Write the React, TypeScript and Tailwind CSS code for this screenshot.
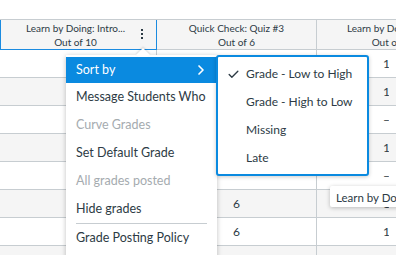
import { Check, ChevronRight } from "lucide-react";

const col3 = ["10", "10", "–", "10", "–", "10", "10", "10"];
const col2: Record<number, string> = { 5: "6", 6: "6" };

const menuItems = [
  { label: "Message Students Who" },
  { label: "Curve Grades", disabled: true },
  { label: "Set Default Grade" },
  { label: "All grades posted", disabled: true },
  { label: "Hide grades" },
];

const sortItems = ["Grade - Low to High", "Grade - High to Low", "Missing", "Late"];

export default function App() {
  return (
    <div className="relative h-[255px] w-[396px] overflow-hidden bg-white font-['Lato','Noto_Sans',sans-serif] text-[#2d3b45]">
      <div className="h-[19px]" />

      {/* header */}
      <div className="flex h-[31px] w-[480px] border-t border-[#c7cdd1] bg-[#f5f5f5] text-[10px] leading-[14px]">
        <div className="relative flex w-[157px] flex-col items-center justify-center border border-t-0 border-[#1b8be0] pr-[6px]">
          <span>Learn by Doing: Intro...</span>
          <span>Out of 10</span>
          <div className="absolute right-[13px] top-[9px] flex flex-col gap-[2px]">
            <span className="block h-[2px] w-[2px] bg-[#2d3b45]" />
            <span className="block h-[2px] w-[2px] bg-[#2d3b45]" />
            <span className="block h-[2px] w-[2px] bg-[#2d3b45]" />
          </div>
        </div>
        <div className="flex w-[160px] flex-col items-center justify-center border-r border-b border-[#c7cdd1]">
          <span>Quick Check: Quiz #3</span>
          <span>Out of 6</span>
        </div>
        <div className="flex w-[152px] flex-col items-center justify-center border-b border-[#c7cdd1]">
          <span>Learn by Doing: Intro</span>
          <span>Out of 10</span>
        </div>
      </div>

      {/* rows */}
      {col3.map((v, i) => (
        <div
          key={i}
          className={`flex h-[28px] w-[480px] border-b border-[#c7cdd1] text-[12px] ${i % 2 ? "bg-[#f5f5f5]" : "bg-white"}`}
        >
          <div className="w-[157px] border-r border-[#c7cdd1]" />
          <div className="flex w-[160px] items-center justify-center border-r border-[#c7cdd1]">{col2[i] ?? ""}</div>
          <div className="flex w-[72px] items-center overflow-hidden whitespace-nowrap pl-[66px]">{v}</div>
        </div>
      ))}

      {/* tooltip */}
      <div className="absolute left-[330px] top-[186px] h-[21px] w-[100px] whitespace-nowrap rounded-[2px] bg-white px-[6px] pt-[3px] text-[11.5px] text-[#2d3b45] shadow-[0_1px_4px_rgba(0,0,0,0.25)]">
        Learn by Doing: Intro
      </div>

      {/* menu */}
      <div className="absolute left-[66px] top-[55px] w-[151px] bg-white pb-2 pt-[2px] text-[12.5px] shadow-[0_1px_5px_rgba(0,0,0,0.25)]">
        <div className="absolute -top-[5px] left-[72px] h-[10px] w-[10px] rotate-45 bg-white shadow-[-1px_-1px_2px_rgba(0,0,0,0.12)]" />
        <div className="relative flex h-[26px] items-center justify-between bg-[#0a8ae0] pl-[10px] pr-[8px] text-white">
          <span>Sort by</span>
          <ChevronRight size={16} strokeWidth={2.5} />
        </div>
        {menuItems.map((m) => (
          <div
            key={m.label}
            className={`flex h-[28px] items-center whitespace-nowrap pl-[10px] ${m.disabled ? "text-[#a5abaf]" : ""}`}
          >
            {m.label}
          </div>
        ))}
        <div className="mx-[10px] border-t border-[#c7cdd1]" />
        <div className="flex h-[28px] items-center whitespace-nowrap pl-[10px]">Grade Posting Policy</div>
        <div className="h-[28px]" />
      </div>

      {/* submenu */}
      <div className="absolute left-[216px] top-[55px] w-[153px] rounded-[3px] border-2 border-[#0a8ae0] bg-white pb-[2px] pt-[3px] text-[12px] shadow-[0_1px_4px_rgba(0,0,0,0.2)]">
        {sortItems.map((s, i) => (
          <div key={s} className="flex h-[28px] items-center whitespace-nowrap">
            <span className="flex w-[28px] justify-center pl-[3px]">
              {i === 0 && <Check size={13} strokeWidth={2.5} />}
            </span>
            <span>{s}</span>
          </div>
        ))}
      </div>
    </div>
  );
}
